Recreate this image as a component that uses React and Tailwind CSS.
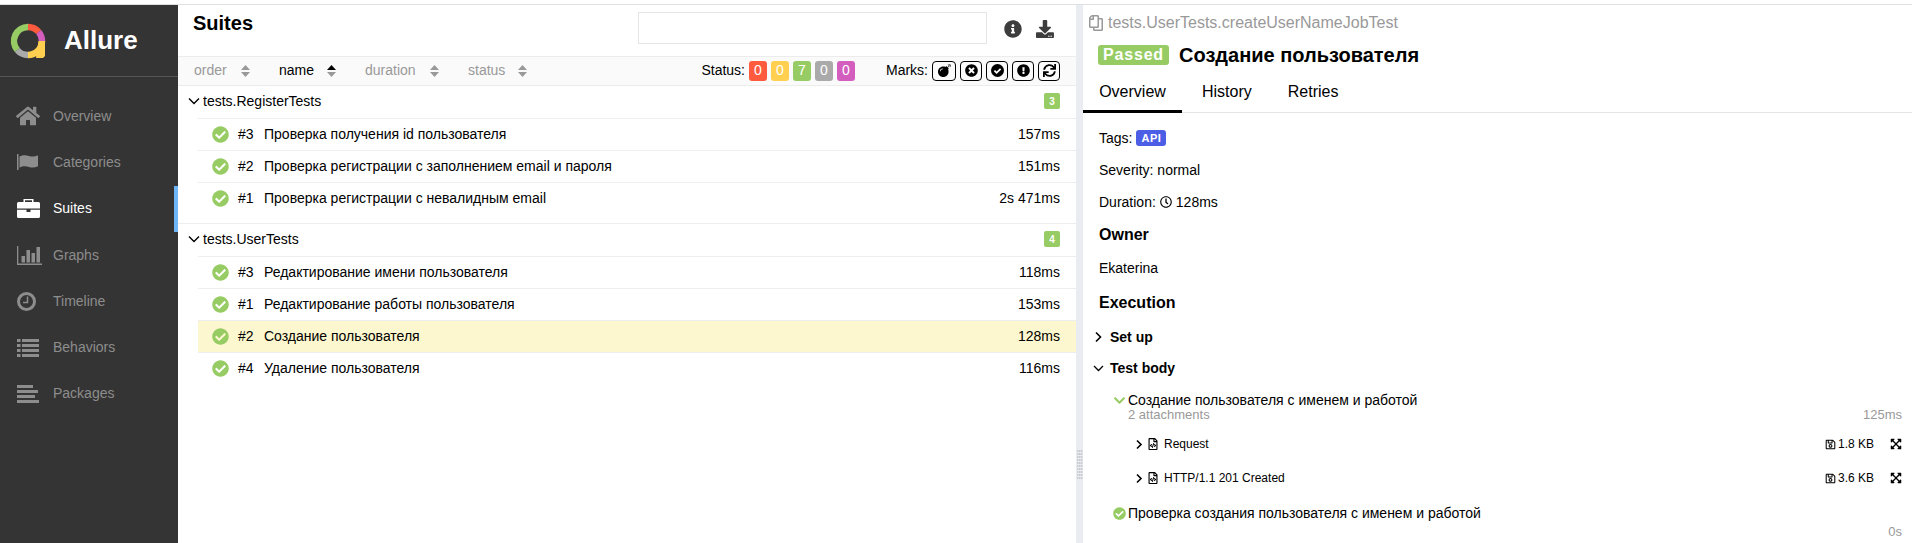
import React from "react";
import { FaHome, FaCheckCircle, FaInfoCircle, FaDownload, FaBomb, FaTimesCircle, FaExclamationCircle, FaSync, FaRegSave, FaExpandArrowsAlt, FaRegFileCode, FaRegCopy, FaChevronDown, FaRegClock } from "react-icons/fa";

const font = { fontFamily: '"Liberation Sans", Arial, sans-serif' };

function Logo() {
  const c = 28, r = 14;
  const p = (a) => [c + r * Math.sin((a * Math.PI) / 180), 41 - r * Math.cos((a * Math.PI) / 180)];
  const arc = (a, b) => {
    const [x1, y1] = p(a), [x2, y2] = p(b);
    const large = (b - a + 360) % 360 > 180 ? 1 : 0;
    return `M${x1} ${y1}A${r} ${r} 0 ${large} 1 ${x2} ${y2}`;
  };
  return (
    <svg width="56" height="71" viewBox="0 5 56 71" className="shrink-0">
      <g fill="none" strokeWidth="6.5">
        <path d={arc(230, 360)} stroke="#97cc64" />
        <path d={arc(0, 50)} stroke="#fd5a3e" />
        <path d={arc(50, 90)} stroke="#d35ebe" />
        <path d={arc(90, 180)} stroke="#ffd050" />
        <path d={arc(180, 230)} stroke="#aaaaaa" />
      </g>
      <path d="M38.5 41H45V56L43 58H36Z" fill="#ffd050" />
    </svg>
  );
}

function FlagIcon({ className }) {
  return (
    <svg viewBox="0 0 22 16" className={className} fill="currentColor">
      <path d="M0 0h1.500v16H0z" />
      <path d="M2.500 2.500C6 .5 9 1 12 2c3 1 6 .8 9-.8v11c-3 1.600-6 1.800-9 .8s-6-1.400-9.500.8z" />
    </svg>
  );
}

function BriefcaseIcon({ className }) {
  return (
    <svg viewBox="0 0 23 19" className={className}>
      <path fillRule="evenodd" fill="currentColor" d="M6.500 0h10v3h5A1.500 1.500 0 0 1 23 4.500V9.500H0V4.500A1.500 1.500 0 0 1 1.500 3h5zM8 1.200V3h7V1.200z" />
      <path fill="currentColor" d="M0 10.800h9.500V13h4v-2.200H23V17.500A1.500 1.500 0 0 1 21.500 19h-20A1.500 1.500 0 0 1 0 17.500z" />
    </svg>
  );
}

function GraphIcon({ className }) {
  return (
    <svg viewBox="0 0 25 19" className={className} fill="currentColor">
      <path d="M0 0h1.300v17.500H25V19H0z" />
      <path d="M4.500 10h3.500v6.500H4.500zM9.500 4h3.500v12.500H9.500zM14.500 7h3.500v9.500h-3.500zM19.500 1h3.500v15.500h-3.500z" />
    </svg>
  );
}

function ClockIcon({ className }) {
  return (
    <svg viewBox="0 0 19 19" className={className}>
      <circle cx="9.500" cy="9.500" r="8" fill="none" stroke="currentColor" strokeWidth="3" />
      <path d="M10.500 4.500v6H6" fill="none" stroke="currentColor" strokeWidth="1.500" />
    </svg>
  );
}

function ListIcon({ className }) {
  return (
    <svg viewBox="0 0 22 18" className={className} fill="currentColor">
      <path d="M0 0h3.500v3H0zM5 0h17v3H5zM0 5h3.500v3H0zM5 5h17v3H5zM0 10h3.500v3H0zM5 10h17v3H5zM0 15h3.500v3H0zM5 15h17v3H5z" />
    </svg>
  );
}

function PackagesIcon({ className }) {
  return (
    <svg viewBox="0 0 22 18" className={className} fill="currentColor">
      <path d="M0 0h16v3H0zM0 5h21v3H0zM0 10h18v3H0zM0 15h22v3H0z" />
    </svg>
  );
}

function NavItem({ icon: Icon, label, active, size }) {
  return (
    <div className={`h-[46.3px] flex items-center relative ${active ? "text-white" : "text-[#8d8d8d]"}`}>
      <div className="w-[53px] pl-[17px] shrink-0 flex items-center">
        <Icon className={size} />
      </div>
      <span className="text-[14px]">{label}</span>
      {active && <div className="absolute right-0 top-0 bottom-0 w-1 bg-[#6eb5f7]" />}
    </div>
  );
}

function Sort({ active }) {
  return (
    <svg width="9" height="12" viewBox="0 0 9 12" className="shrink-0">
      <path d="M4.500 0L9 5H0z" fill={active ? "#000" : "#999"} />
      <path d="M4.500 12L0 7h9z" fill="#999" />
    </svg>
  );
}

function SortItem({ label, active, w, after }) {
  return (
    <div className="flex items-center" style={{ width: w }}>
      <span className={active ? "text-black" : "text-[#999]"} style={{ width: after }}>{label}</span>
      <Sort active={active} />
    </div>
  );
}

function Badge({ color, children }) {
  return (
    <div className={`w-[18px] h-5 rounded-[3px] text-white flex items-center justify-center text-[14px] ${color}`}>{children}</div>
  );
}

function Mark({ w, children }) {
  return (
    <div className="h-5 border border-black rounded-[4px] flex items-center justify-center" style={{ width: w }}>{children}</div>
  );
}

function Row({ n, name, time, hl }) {
  return (
    <div className={`h-8 border-t border-[#eceef0] flex items-center text-[14px] pr-4 pb-px ${hl ? "bg-[#fdf7cf]" : ""}`}>
      <FaCheckCircle className="text-[#97cc64] text-[17px] ml-[14px] shrink-0" />
      <span className="ml-[9px] w-[26px] shrink-0">{n}</span>
      <span className="flex-1">{name}</span>
      <span>{time}</span>
    </div>
  );
}

function Group({ name, count, children }) {
  return (
    <div>
      <div className="h-8 flex items-center pr-4 pb-[2px] text-[14px]">
        <svg width="12" height="8" viewBox="0 0 12 8" className="ml-[10px] shrink-0">
          <path d="M1 1.500l5 5 5-5" fill="none" stroke="#000" strokeWidth="1.400" />
        </svg>
        <span className="ml-[3px] flex-1">{name}</span>
        <div className="w-4 h-4 rounded-[2px] bg-[#97cc64] text-white text-[10px] font-bold flex items-center justify-center">{count}</div>
      </div>
      <div className="ml-5">{children}</div>
    </div>
  );
}

function AttachRow({ label, size }) {
  return (
    <div className="h-[34px] flex items-center text-[12px] pl-[52px] pr-[10px]">
      <svg width="9" height="11" viewBox="0 0 9 11" className="shrink-0">
        <path d="M2 1.500l4 4-4 4" fill="none" stroke="#000" strokeWidth="1.600" />
      </svg>
      <FaRegFileCode className="ml-[3px] text-[12px] shrink-0" />
      <span className="ml-[5px] flex-1">{label}</span>
      <FaRegSave className="text-[11px] shrink-0" />
      <span className="ml-[2px]">{size}</span>
      <FaExpandArrowsAlt className="ml-[16px] text-[12px] shrink-0" />
    </div>
  );
}

function Grip() {
  return (
    <svg width="6" height="30" viewBox="0 0 6 30" className="shrink-0">
      <defs>
        <pattern id="grip" width="2" height="3" patternUnits="userSpaceOnUse">
          <rect width="1.500" height="2" fill="#c9cdd1" />
        </pattern>
      </defs>
      <rect width="6" height="30" fill="url(#grip)" />
    </svg>
  );
}

export default function App() {
  return (
    <div className="h-[543px] w-[1912px] overflow-hidden bg-white text-black flex flex-col" style={font}>
      <div className="h-[5px] shrink-0 border-b border-[#e0e0e0]" />
      <div className="flex flex-1 min-h-0">
        <aside className="w-[178px] shrink-0 bg-[#343434]">
          <div className="h-[72px] border-b border-[#555] flex items-center">
            <Logo />
            <span className="ml-2 text-white font-bold text-[26px]">Allure</span>
          </div>
          <nav className="mt-[16px]">
            <NavItem icon={FaHome} label="Overview" size="text-[24px] -ml-px" />
            <NavItem icon={FlagIcon} label="Categories" size="w-[22px] h-4" />
            <NavItem icon={BriefcaseIcon} label="Suites" size="w-[23px] h-[19px]" active />
            <NavItem icon={GraphIcon} label="Graphs" size="w-[25px] h-[19px]" />
            <NavItem icon={ClockIcon} label="Timeline" size="w-[19px] h-[19px]" />
            <NavItem icon={ListIcon} label="Behaviors" size="w-[22px] h-[18px]" />
            <NavItem icon={PackagesIcon} label="Packages" size="w-[22px] h-[18px]" />
          </nav>
        </aside>
        <main className="w-[898px] shrink-0">
          <div className="h-[51px] flex items-start pr-[22px]">
            <h2 className="ml-[15px] mt-[6px] text-[20px] font-bold leading-6">Suites</h2>
            <div className="ml-[385px] mt-[7px] w-[350px] h-[32px] border border-[#e4e5e6]" />
            <FaInfoCircle className="ml-[17px] mt-[15px] text-[18px] text-[#3d3d3d]" />
            <FaDownload className="ml-[14px] mt-[15px] text-[18px] text-[#3d3d3d]" />
          </div>
          <div className="h-[30px] bg-[#fafafa] border-y border-[#ececec] flex items-center text-[14px] pl-4 pr-4 pb-px">
            <SortItem label="order" w={85} after={47} />
            <SortItem label="name" active w={86} after={48} />
            <SortItem label="duration" w={103} after={65} />
            <SortItem label="status" w={59} after={51} />
            <div className="ml-auto flex items-center">
              <span>Status:</span>
              <div className="flex gap-1 ml-1">
                <Badge color="bg-[#fd5a3e]">0</Badge>
                <Badge color="bg-[#ffd050]">0</Badge>
                <Badge color="bg-[#97cc64]">7</Badge>
                <Badge color="bg-[#aaaaaa]">0</Badge>
                <Badge color="bg-[#d35ebe]">0</Badge>
              </div>
              <span className="ml-[31px]">Marks:</span>
              <div className="flex gap-1 ml-1">
                <Mark w={24}><FaBomb className="text-[13px]" /></Mark>
                <Mark w={22}><FaTimesCircle className="text-[13px]" /></Mark>
                <Mark w={22}><svg width="13" height="13" viewBox="0 0 13 13"><circle cx="6.500" cy="6.500" r="6.500" /><path d="M3.400 6.600l2.200 2.200 4-4" fill="none" stroke="#fff" strokeWidth="1.800" /></svg></Mark>
                <Mark w={22}><FaExclamationCircle className="text-[13px]" /></Mark>
                <Mark w={22}><FaSync className="text-[13px]" /></Mark>
              </div>
            </div>
          </div>
          <Group name="tests.RegisterTests" count="3">
            <Row n="#3" name="Проверка получения id пользователя" time="157ms" />
            <Row n="#2" name="Проверка регистрации с заполнением email и пароля" time="151ms" />
            <Row n="#1" name="Проверка регистрации с невалидным email" time="2s 471ms" />
          </Group>
          <div className="mt-[9px] border-t border-[#eceef0]" />
          <Group name="tests.UserTests" count="4">
            <Row n="#3" name="Редактирование имени пользователя" time="118ms" />
            <Row n="#1" name="Редактирование работы пользователя" time="153ms" />
            <Row n="#2" name="Создание пользователя" time="128ms" hl />
            <Row n="#4" name="Удаление пользователя" time="116ms" />
          </Group>
        </main>
        <div className="w-[7px] shrink-0 bg-[#e9edf2] flex items-start justify-center pt-[445px]">
          <Grip />
        </div>
        <section className="flex-1 min-w-0">
          <div className="h-[36px] pl-[5px] flex items-center text-[16px] text-[#999]">
            <FaRegCopy className="text-[16px] text-[#999] -scale-x-100" />
            <span className="ml-1">tests.UserTests.createUserNameJobTest</span>
          </div>
          <div className="h-[28px] pl-[15px] flex items-center">
            <span className="w-[71px] h-[20px] rounded-[3px] bg-[#97cc64] text-white font-bold text-[16px] tracking-[0.8px] flex items-center justify-center">Passed</span>
            <span className="ml-[10px] font-bold text-[20px]">Создание пользователя</span>
          </div>
          <div className="h-[44px] flex items-end text-[16px] border-b border-[#e4e4e4]">
            <div className="w-[99px] h-[37px] pb-[2px] border-b-[3px] border-black flex items-center justify-center -mb-px">Overview</div>
            <span className="ml-[20px] h-[37px] pb-[2px] border-b-[3px] border-transparent flex items-center -mb-px">History</span>
            <span className="ml-[36px] h-[37px] pb-[2px] border-b-[3px] border-transparent flex items-center -mb-px">Retries</span>
          </div>
          <div className="pl-4 text-[14px]">
            <div className="h-8 mt-[9px] flex items-center">
              <span>Tags:</span>
              <span className="ml-1 w-[30px] h-4 rounded-[3px] bg-[#4d5ee6] text-white text-[11px] font-bold flex items-center justify-center tracking-[0.5px]">API</span>
            </div>
            <div className="h-8 flex items-center">Severity: normal</div>
            <div className="h-8 flex items-center">Duration:<FaRegClock className="mx-1 text-[12px]" />128ms</div>
            <div className="h-[34px] flex items-center font-bold text-[16px]">Owner</div>
            <div className="h-8 flex items-center">Ekaterina</div>
            <div className="h-[37px] flex items-center font-bold text-[16px]">Execution</div>
          </div>
          <div className="text-[14px]">
            <div className="h-8 flex items-center font-bold pl-[11px]">
              <svg width="9" height="12" viewBox="0 0 9 12"><path d="M2 1.500l4.500 4.500L2 10.500" fill="none" stroke="#000" strokeWidth="1.600" /></svg>
              <span className="ml-[7px]">Set up</span>
            </div>
            <div className="h-[30px] flex items-center font-bold pl-[10px]">
              <svg width="11" height="9" viewBox="0 0 11 9"><path d="M1 2l4.500 4.500L10 2" fill="none" stroke="#000" strokeWidth="1.300" /></svg>
              <span className="ml-[6px]">Test body</span>
            </div>
            <div className="pl-[30px] pr-[10px] mt-[9px]">
              <div className="flex items-center h-4">
                <FaChevronDown className="text-[#97cc64] text-[13px] shrink-0" />
                <span className="ml-[2px]">Создание пользователя с именем и работой</span>
              </div>
              <div className="flex justify-between items-center h-[14px] text-[#999] pl-[15px] text-[13px]">
                <span>2 attachments</span>
                <span>125ms</span>
              </div>
            </div>
            <div className="mt-[5px]">
              <AttachRow label="Request" size="1.8 KB" />
              <AttachRow label="HTTP/1.1 201 Created" size="3.6 KB" />
            </div>
            <div className="mt-[10px] pl-[30px] pr-[10px] flex items-center h-4">
              <FaCheckCircle className="text-[#97cc64] text-[13px] shrink-0" />
              <span className="ml-[2px]">Проверка создания пользователя с именем и работой</span>
            </div>
            <div className="pr-[10px] text-right text-[13px] text-[#999] mt-[1px]">0s</div>
          </div>
        </section>
      </div>
    </div>
  );
}
